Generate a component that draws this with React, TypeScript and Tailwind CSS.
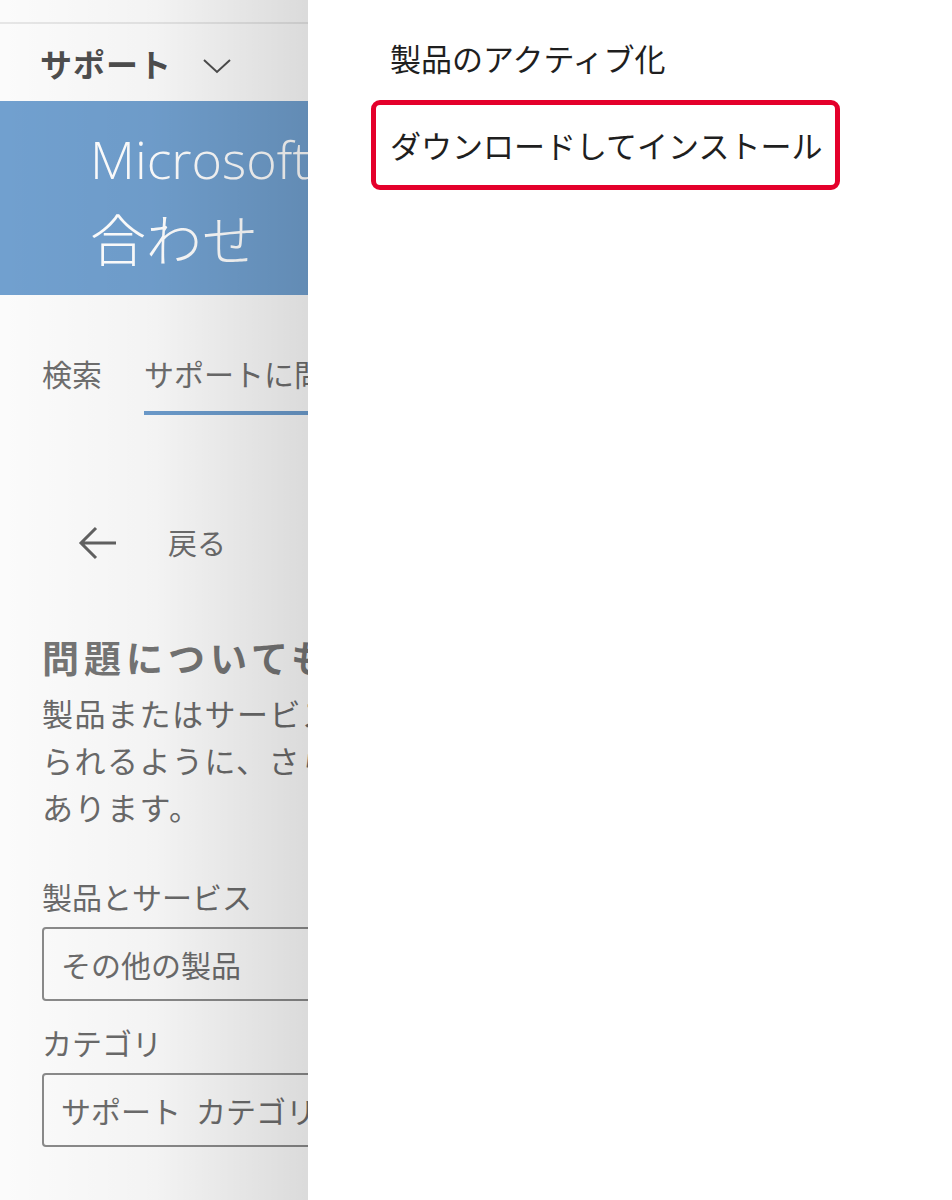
import React from "react";

const jp = { fontFamily: '"Noto Sans CJK JP", "Noto Sans", sans-serif' };

function Chevron() {
  return (
    <svg width="30" height="18" viewBox="0 0 30 18" fill="none" className="ml-[30px] mt-[6px]">
      <path d="M2 3 L15 15 L28 3" stroke="#4f4f4f" strokeWidth="2" />
    </svg>
  );
}

function BackArrow() {
  return (
    <svg width="40" height="34" viewBox="0 0 40 34" fill="none">
      <path d="M38 17 H4 M18 2 L3 17 L18 32" stroke="#616161" strokeWidth="3" />
    </svg>
  );
}

function Field({ label, value }: { label: string; value: string }) {
  return (
    <div className="flex flex-col">
      <div className="text-[30px] leading-[46px] text-[#6a6a6a] whitespace-nowrap">{label}</div>
      <div className="mt-[8px] h-[74px] w-[420px] rounded-[4px] border-2 border-[#8a8a8a] pl-[17px] flex items-center text-[30px] text-[#6c6c6c] whitespace-nowrap overflow-hidden">
        {value}
      </div>
    </div>
  );
}

export default function App() {
  return (
    <div className="relative h-[1200px] w-[952px] overflow-hidden bg-[#fbfbfb]" style={jp}>
      {/* background page */}
      <div className="flex flex-col">
        <div className="h-[22px] bg-[#fbfbfb]" />
        <div className="h-[79px] border-t-2 border-[#e6e6e6] flex items-center pl-[40px]">
          <span className="text-[32px] font-bold text-[#4e4e4e] tracking-[1px]">サポート</span>
          <Chevron />
        </div>
        <div className="h-[194px] bg-[#71a0cf] pl-[90px] pt-[19px] text-white whitespace-nowrap">
          <div className="text-[52px] leading-[78px] font-light" style={{ fontFamily: '"Open Sans", "Noto Sans CJK JP", sans-serif' }}>
            Microsoft サポートに問い
          </div>
          <div className="text-[56px] leading-[78px] font-light">合わせ</div>
        </div>
        <div className="flex pl-[42px] pt-[56px] gap-[42px] text-[30px] text-[#6e6e6e] whitespace-nowrap">
          <div className="pb-[15px]">検索</div>
          <div className="pb-[15px] border-b-[4px] border-[#6c9ccd]">サポートに問い合わせ</div>
        </div>
        <div className="flex items-center pl-[78px] mt-[108px] h-[40px]">
          <BackArrow />
          <span className="ml-[50px] text-[29px] text-[#6e6e6e]">戻る</span>
        </div>
        <div className="pl-[42px] mt-[68px] whitespace-nowrap">
          <div className="text-[37px] font-bold text-[#757575] tracking-[5px] leading-[52px]">問題についてもう少しお聞かせください</div>
          <div className="mt-[6px] text-[31px] leading-[47px] text-[#6a6a6a] tracking-[1.5px]">
            <div>製品またはサービスについて適切なサポートを受け</div>
            <div>られるように、さらに詳しい情報を提供する必要が</div>
            <div>あります。</div>
          </div>
          <div className="mt-[43px] flex flex-col gap-[18px]">
            <Field label="製品とサービス" value="その他の製品" />
            <Field label="カテゴリ" value="サポート&#8194;カテゴリを選択してください" />
          </div>
        </div>
      </div>

      {/* dim shade thrown by the open panel */}
      <div className="absolute left-0 top-0 h-full w-[308px] bg-gradient-to-r from-[rgba(0,0,0,0)] via-[rgba(0,0,0,0.03)] to-[rgba(0,0,0,0.13)]" />

      {/* flyout panel */}
      <div className="absolute right-0 top-0 h-full w-[644px] bg-white pl-[82px] pt-[33px] text-[31px] text-[#1f1f1f]">
        <div className="leading-[50px]">製品のアクティブ化</div>
        <div className="mt-[17px] ml-[-19px] w-[469px] h-[90px] rounded-[9px] border-[5px] border-[#e4002b] pl-[14px] flex items-center whitespace-nowrap">
          ダウンロードしてインストール
        </div>
      </div>
    </div>
  );
}
